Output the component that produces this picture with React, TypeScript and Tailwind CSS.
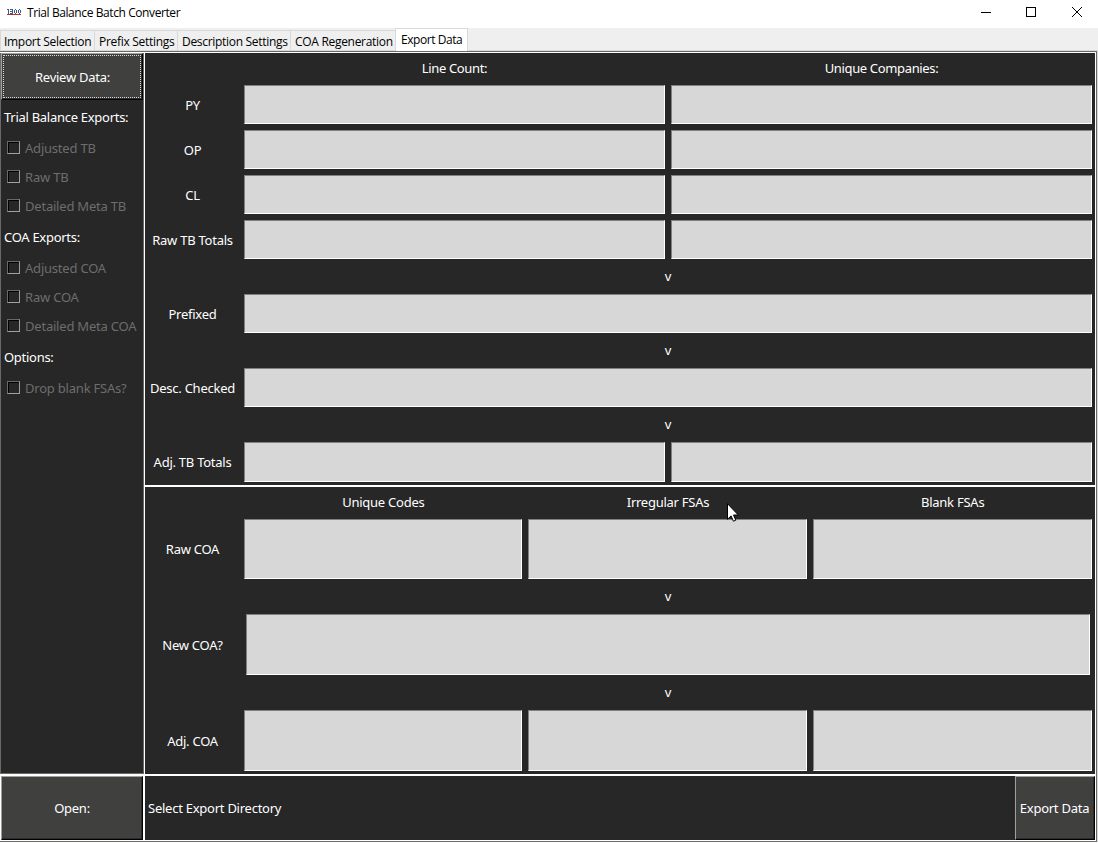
import React from "react";

const raised =
  "flex items-center justify-center bg-[#40403f] border border-t-[#a0a0a0] border-l-[#a0a0a0] border-r-black border-b-black text-white shadow-[inset_-1px_-1px_0_#2c2c2c]";

function Box({ className = "" }: { className?: string }) {
  return (
    <div
      className={`border border-t-[#808080] border-l-[#808080] border-r-white border-b-white bg-[#d7d7d7] ${className}`}
    />
  );
}

function Label({ children }: { children: React.ReactNode }) {
  return <div className="flex w-[99px] shrink-0 items-center justify-center pt-px pr-[4px]">{children}</div>;
}

function Row({ label, cells, className }: { label: string; cells: number; className: string }) {
  return (
    <div className={`flex shrink-0 ${className}`}>
      <Label>{label}</Label>
      <div className="flex w-[848px] gap-1.5">
        {Array.from({ length: cells }, (_, i) => (
          <Box key={i} className={cells === 3 && i === 0 ? "w-[278px] shrink-0" : "flex-1"} />
        ))}
      </div>
    </div>
  );
}

function Arrow() {
  return <div className="ml-[99px] flex h-[35px] w-[848px] shrink-0 items-center justify-center">v</div>;
}

function Check({ children }: { children: React.ReactNode }) {
  return (
    <div className="flex h-[29px] items-center pl-[6px] tracking-[-0.21px] text-[#6d6d6d]">
      <span className="mr-[5px] mb-[2px] h-[13px] w-[13px] border border-t-[#696969] border-l-[#696969] border-r-[#a0a0a0] border-b-[#a0a0a0] bg-[#272727] shadow-[inset_1px_1px_0_#000]" />
      {children}
    </div>
  );
}

function Heading({ children }: { children: React.ReactNode }) {
  return <div className="flex h-[33px] items-center pl-[3px] tracking-[-0.28px]">{children}</div>;
}

const tabs = [
  { name: "Import Selection", cls: "w-[94px] pl-[3px]" },
  { name: "Prefix Settings", cls: "w-[83px] pl-[4px]" },
  { name: "Description Settings", cls: "w-[113px] pl-[4px]" },
  { name: "COA Regeneration", cls: "w-[105px] pl-[4px]" },
];

export default function App() {
  return (
    <div className="relative flex h-[843px] w-[1098px] flex-col overflow-hidden bg-white font-['Noto_Sans',sans-serif] text-[13px] leading-none tracking-[-0.25px] whitespace-nowrap text-white">
      <header className="flex h-7 shrink-0 items-center bg-white pl-[7px] font-['Open_Sans',sans-serif] text-[12px] tracking-[-0.41px] text-black">
        <svg width="14" height="6" viewBox="0 0 14 6" className="mr-1.5 mb-1" shapeRendering="crispEdges">
          <path d="M0 .5h2M1.500 0v5M3 .5h3M5.500 0v5M3 4.500h3M3 2.500h3M7.500 1v3M9.500 1v3M8 .5h1M8 4.500h1M11.500 1v3M13.500 1v3M12 .5h1M12 4.500h1" fill="none" stroke="#44598c" />
          <path d="M0 5.500h14" stroke="#a33c32" />
        </svg>
        <span className="mb-[3px] grow">Trial Balance Batch Converter</span>
        <svg width="118" height="28" viewBox="980 0 118 28" fill="none" stroke="#000">
          <path d="M981 12.500h10M1026.500 7.500h9v9h-9z" shapeRendering="crispEdges" />
          <path d="m1072 7 10 10m0-10-10 10" />
        </svg>
      </header>

      <nav className="flex h-[23px] shrink-0 items-end border-b border-[#d9d9d9] bg-[#efefef] font-['Open_Sans',sans-serif] text-[12px] tracking-[-0.3px] text-black">
        {tabs.map((t) => (
          <div key={t.name} className={`flex h-5 items-center border-t border-l border-[#d9d9d9] pt-[3px] ${t.cls}`}>
            {t.name}
          </div>
        ))}
        <div className="-mb-px flex h-[23px] w-[73px] items-center border border-b-0 border-[#d9d9d9] bg-white pl-[5px] tracking-[-0.45px]">
          Export Data
        </div>
      </nav>

      <div className="flex h-[791px] shrink-0 flex-col border-r border-[#d9d9d9]">
        <div className="flex h-full flex-col border-t border-r border-b border-[#696969]">
          <div className="flex h-full flex-col border-t border-r border-b border-white">
            <div className="flex h-[721px] shrink-0">
              <aside className="w-[144px] shrink-0 border-x border-b border-[#696969] bg-[#272727]">
                <div className={`mb-px h-[47px] w-[142px] p-px ${raised}`}>
                  <div className="flex h-full w-full items-center justify-center border border-dotted border-[#d8d8d8] pt-[2px] pl-px">Review Data:</div>
                </div>
                <Heading>Trial Balance Exports:</Heading>
                <Check>Adjusted TB</Check>
                <Check>Raw TB</Check>
                <Check>Detailed Meta TB</Check>
                <Heading>COA Exports:</Heading>
                <Check>Adjusted COA</Check>
                <Check>Raw COA</Check>
                <Check>Detailed Meta COA</Check>
                <Heading>Options:</Heading>
                <Check>Drop blank FSAs?</Check>
              </aside>
              <main className="flex grow flex-col border-l border-white bg-[#272727]">
                <section className="flex h-[432px] shrink-0 flex-col">
                  <div className="ml-[99px] flex h-8 w-[848px] shrink-0 items-center gap-1.5 pb-[2px] text-center tracking-[-0.35px]">
                    <span className="flex-1">Line Count:</span>
                    <span className="flex-1">Unique Companies:</span>
                  </div>
                  <div className="flex flex-col gap-1.5">
                    <Row label="PY" cells={2} className="h-[39px]" />
                    <Row label="OP" cells={2} className="h-[39px]" />
                    <Row label="CL" cells={2} className="h-[39px]" />
                    <Row label="Raw TB Totals" cells={2} className="h-[39px]" />
                  </div>
                  <Arrow />
                  <Row label="Prefixed" cells={1} className="h-[39px]" />
                  <Arrow />
                  <Row label="Desc. Checked" cells={1} className="h-[39px]" />
                  <Arrow />
                  <Row label="Adj. TB Totals" cells={2} className="h-[40px]" />
                </section>
                <section className="flex grow flex-col border-t-2 border-white">
                  <div className="ml-[99px] flex h-8 w-[848px] shrink-0 items-center gap-1.5 pb-[2px] text-center">
                    <span className="flex-1">Unique Codes</span>
                    <span className="flex-1">Irregular FSAs</span>
                    <span className="flex-1">Blank FSAs</span>
                  </div>
                  <Row label="Raw COA" cells={3} className="h-[60px]" />
                  <Arrow />
                  <div className="flex h-[61px] shrink-0">
                    <Label>New COA?</Label>
                    <Box className="ml-[2px] w-[844px]" />
                  </div>
                  <Arrow />
                  <Row label="Adj. COA" cells={3} className="h-[61px]" />
                </section>
              </main>
            </div>
            <footer className="flex grow border-t-2 border-white bg-[#272727]">
              <div className="w-[145px] shrink-0 border-r-2 border-l border-white">
                <div className={`h-full w-full ${raised}`}>Open:</div>
              </div>
              <div className="flex grow items-center pl-[3px]">Select Export Directory</div>
              <div className={`w-20 pr-px ${raised}`}>Export Data</div>
            </footer>
          </div>
        </div>
      </div>

      <svg className="absolute top-[503px] left-[727px]" width="12" height="19" viewBox="0 0 12 19">
        <path d="M.5.7v15.600l3.600-3.400 2.300 5.300 2.400-1-2.300-5.200h4.800z" fill="#fff" stroke="#000" />
      </svg>
    </div>
  );
}
